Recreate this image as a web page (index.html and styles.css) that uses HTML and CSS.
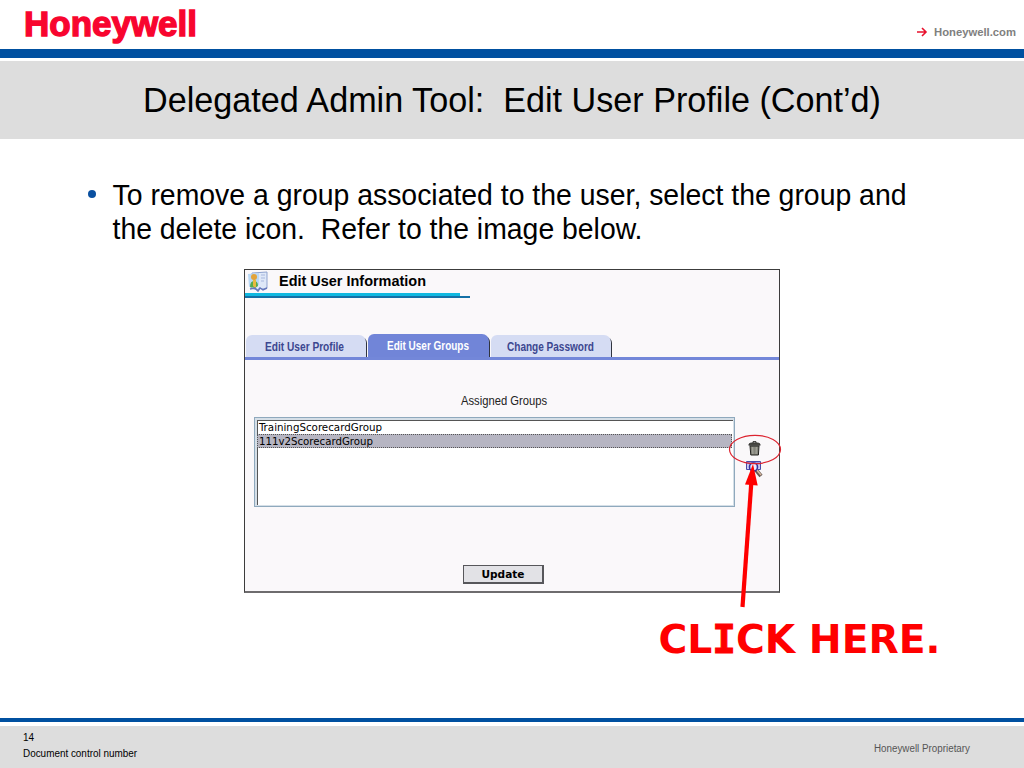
FILE: index.html
```html
<!DOCTYPE html>
<html lang="en">
<head>
  <meta charset="UTF-8">
  <meta name="viewport" content="width=device-width, initial-scale=1.0">
  <title>Delegated Admin Tool</title>
  <link rel="stylesheet" href="styles.css">
</head>
<body>
  <div class="slide">
    <header class="header">
      <svg class="logo" width="190" height="49" viewBox="0 0 190 49">
        <text x="1" y="36" textLength="173" lengthAdjust="spacingAndGlyphs">Honeywell</text>
      </svg>
      <div class="site-link">
        <svg width="10" height="10" viewBox="0 0 10 10"><path d="M0 5h9M5 1l4 4-4 4" fill="none" stroke="#e8112d" stroke-width="1.6"/></svg>
        <svg width="84" height="16" viewBox="0 0 84 16"><text x="0" y="12" textLength="82" lengthAdjust="spacingAndGlyphs">Honeywell.com</text></svg>
      </div>
    </header>

    <div class="title-bar">
      <svg width="760" height="60" viewBox="0 0 760 60"><text x="11" y="43" textLength="738" lengthAdjust="spacingAndGlyphs">Delegated Admin Tool:&#160; Edit User Profile (Cont’d)</text></svg>
    </div>

    <main class="content">
      <div class="bullet">
        <span class="dot"></span>
        <svg width="820" height="76" viewBox="0 0 820 76">
          <text x="0.5" y="30" textLength="794" lengthAdjust="spacingAndGlyphs">To remove a group associated to the user, select the group and</text>
          <text x="0.5" y="64" textLength="530" lengthAdjust="spacingAndGlyphs">the delete icon.&#160; Refer to the image below.</text>
        </svg>
      </div>

      <section class="panel">
        <div class="panel-head">
          <svg class="user-icon" width="22" height="21" viewBox="0 0 22 21">
            <path d="M4 2l15-1v16l-4 1-3-1-3 2-6-2z" fill="#dfe8f8" stroke="#8fa3cf"/>
            <path d="M0 3l11-1v12l-10 2z" fill="#b9d8f5"/>
            <path d="M13 4h4M13 7h4M13 10h3" stroke="#a9b8de"/>
            <path d="M2 16q0-6 4-6t4 5l-3 2z" fill="#57ab4e"/>
            <circle cx="6" cy="6" r="3" fill="#e2a33a"/>
            <path d="M5 9h3v7l-1 1-2-2z" fill="#e8b93f"/>
            <path d="M2 18l5-1 3 3 2-3 3 2 4-2" fill="none" stroke="#6678bd" stroke-width="1.5"/>
          </svg>
          <svg class="panel-title" width="160" height="23" viewBox="0 0 160 23"><text x="0" y="16" textLength="147" lengthAdjust="spacingAndGlyphs">Edit User Information</text></svg>
        </div>
        <div class="rule"></div>

        <nav class="tabs">
          <div class="tab"><svg width="88" height="18"><text x="4" y="14" textLength="79" lengthAdjust="spacingAndGlyphs">Edit User Profile</text></svg></div>
          <div class="tab active"><svg width="90" height="18"><text x="4" y="14" textLength="82" lengthAdjust="spacingAndGlyphs">Edit User Groups</text></svg></div>
          <div class="tab"><svg width="95" height="18"><text x="5" y="14" textLength="87" lengthAdjust="spacingAndGlyphs">Change Password</text></svg></div>
        </nav>

        <div class="groups-label"><svg width="96" height="16"><text x="0" y="12" textLength="86" lengthAdjust="spacingAndGlyphs">Assigned Groups</text></svg></div>
        <div class="groups">
          <div class="list">
            <div class="item"><svg width="136" height="14"><text x="1" y="10" textLength="123" lengthAdjust="spacingAndGlyphs">TrainingScorecardGroup</text></svg></div>
            <div class="item selected"><svg width="128" height="14"><text x="1" y="10.5" textLength="114" lengthAdjust="spacingAndGlyphs">111v2ScorecardGroup</text></svg></div>
          </div>
          <div class="tools">
            <svg width="13" height="15" viewBox="0 0 13 15">
              <path d="M2 5h9l-.6 9H2.8z" fill="#85857c" stroke="#22221f"/>
              <path d="M.8 4.2Q1 2 3 2h7q2 0 2.2 2.2z" fill="#555550" stroke="#22221f" stroke-width=".8"/>
              <path d="M5 2V.7h3V2" fill="none" stroke="#22221f"/>
              <path d="M4.7 6l.2 7M8.3 6l-.2 7" stroke="#aaaaa0"/>
            </svg>
            <svg width="17" height="18" viewBox="0 0 17 18">
              <path d="M.5 1.5h14v8H.5z" fill="#c9c9f2" stroke="#4b49a8"/>
              <path d="M1 3h13" stroke="#6d6bd0"/>
              <path d="M10 10l5 6" stroke="#66574f" stroke-width="4"/>
              <path d="M10 9l5 6" stroke="#d4b7a0" stroke-width="1.6"/>
              <circle cx="7.5" cy="7" r="4" fill="#e9e9ff" stroke="#3533a0" stroke-width="1.6"/>
            </svg>
          </div>
        </div>

        <div class="actions">
          <button class="update"><svg width="52" height="15"><text x="4.5" y="11" textLength="43" lengthAdjust="spacingAndGlyphs">Update</text></svg></button>
        </div>
      </section>

      <div class="callout">
        <svg width="300" height="50" viewBox="0 0 300 50"><text x="0.5" y="36" textLength="282" lengthAdjust="spacingAndGlyphs">CL<tspan class="slab">I</tspan>CK HERE.</text></svg>
      </div>
    </main>

    <footer class="footer">
      <div class="doc">
        <div>14</div>
        <svg width="126" height="16"><text x="0" y="12" textLength="114" lengthAdjust="spacingAndGlyphs">Document control number</text></svg>
      </div>
      <svg class="proprietary" width="108" height="16"><text x="0" y="12" textLength="96" lengthAdjust="spacingAndGlyphs">Honeywell Proprietary</text></svg>
    </footer>

    <svg class="pointer" width="60" height="180" viewBox="0 0 60 180">
      <ellipse cx="30" cy="19.5" rx="25.5" ry="14.2" fill="none" stroke="#dc2430" stroke-width="1.2"/>
      <path d="M17.5 177L26.5 50" stroke="#f00" stroke-width="4.2"/>
      <path d="M28 34L20 54.5L32.7 55.5Z" fill="#f00"/>
    </svg>
  </div>
</body>
</html>
```
FILE: styles.css
```css
body {
  margin: 0;
  font-family: "Liberation Sans", Arial, sans-serif;
  background-color: white;
  color: black;
}
svg {
  display: block;
  flex-shrink: 0;
  overflow: visible;
}
.slide {
  position: relative;
  display: flex;
  flex-direction: column;
  width: 1024px;
  height: 768px;
  overflow: hidden;
}
.header {
  display: flex;
  justify-content: space-between;
  height: 49px;
  padding: 0 6px 0 23px;
  border-bottom: 9px solid #0050a0;
}
.logo text {
  font-size: 35px;
  font-weight: bold;
  fill: #f8052f;
  stroke: #f8052f;
  stroke-width: 1.4px;
}
.site-link {
  display: flex;
  align-items: center;
  gap: 7px;
  padding-top: 15px;
  font-size: 11px;
  font-weight: bold;
  fill: #808080;
}
.title-bar {
  display: flex;
  justify-content: center;
  height: 70px;
  margin-top: 3px;
  padding-top: 8px;
  background-color: #ddd;
  font-size: 34.5px;
}
.content {
  display: flex;
  flex-direction: column;
  height: 578px;
  padding-top: 1px;
}
.bullet {
  display: flex;
  height: 94px;
  padding: 35px 0 0 88px;
  gap: 16px;
  font-size: 29px;
}
.dot {
  width: 8px;
  height: 8px;
  margin-top: 15px;
  border-radius: 50%;
  background-color: #0a50a0;
}
.panel {
  box-sizing: border-box;
  width: 536px;
  height: 324px;
  margin-left: 244px;
  border: 1px solid #3c3c3c;
  border-bottom: 2px solid #6e6c6e;
  background-color: #faf8fa;
}
.panel-head {
  display: flex;
  gap: 9px;
  height: 23px;
  padding-left: 3px;
}
.user-icon {
  margin-top: 1px;
}
.panel-title {
  font-size: 15px;
  font-weight: bold;
}
.rule {
  width: 215px;
  height: 3px;
  background-color: #10b8e0;
}
.rule::after {
  content: "";
  display: block;
  width: 225px;
  height: 2px;
  transform: translateY(3px);
  background-color: #1470a6;
}
.tabs {
  display: flex;
  align-items: flex-end;
  height: 61px;
  padding-left: 1px;
  border-bottom: 3px solid #7387d9;
}
.tab {
  display: flex;
  align-items: center;
  justify-content: center;
  box-sizing: border-box;
  width: 120px;
  height: 22px;
  margin-right: 2px;
  padding-right: 3px;
  border-radius: 6px 7px 0 0;
  background-color: #d5dcf3;
  box-shadow: 2px 1px 0 -1px #30343f;
  font-size: 12px;
  font-weight: bold;
  fill: #3c4790;
}
.tab.active {
  width: 121px;
  height: 23px;
  padding-right: 1px;
  padding-bottom: 1px;
  background-color: #7185d8;
  fill: white;
}
.groups-label {
  padding: 33px 0 8px 216px;
  font-size: 12.5px;
  fill: #222;
}
.groups {
  display: flex;
  gap: 11px;
  height: 90px;
  padding-left: 9px;
}
.list {
  box-sizing: border-box;
  width: 481px;
  height: 90px;
  padding-top: 1px;
  border: 1px solid #8fa9bd;
  outline: 1px solid #d5dfe7;
  outline-offset: -2px;
  box-shadow: inset 2px 2px 0 #d5dfe7, inset 3px 3px 0 #555;
  background-color: white;
  font-family: "DejaVu Sans Condensed", "DejaVu Sans", sans-serif;
  font-size: 11px;
}
.item {
  box-sizing: border-box;
  height: 14px;
  margin: 0 2px;
  padding-left: 1px;
}
.item:first-child {
  height: 15px;
  padding-top: 2px;
}
.item.selected {
  background-color: #b6b5c2;
  outline: 1px dotted #555;
  outline-offset: -1px;
}
.tools {
  display: flex;
  flex-direction: column;
  align-items: center;
  gap: 4px;
  padding-top: 24px;
}
.actions {
  padding: 58px 0 0 218px;
}
.update {
  display: flex;
  align-items: center;
  justify-content: center;
  width: 81px;
  height: 19px;
  padding: 0;
  border: 2px solid #57575b;
  border-width: 1px 2px 2px 1px;
  background-color: #e2e2e6;
  font-family: "DejaVu Sans", sans-serif;
  font-size: 10.5px;
  font-weight: bold;
}
.callout {
  padding: 24px 0 0 658px;
  font-family: "DejaVu Sans", Verdana, sans-serif;
  font-size: 39.5px;
  font-weight: bold;
  fill: #f00;
}
.slab {
  font-family: "DejaVu Sans Mono", monospace;
  stroke: #f00;
  stroke-width: 1px;
}
.footer {
  display: flex;
  justify-content: space-between;
  box-sizing: border-box;
  height: 42px;
  margin-top: auto;
  padding: 0 42px 0 23px;
  background-color: #ddd;
  box-shadow: 0 -4px 0 white, 0 -8px 0 #0050a0;
  font-size: 10px;
}
.doc {
  padding-top: 6px;
}
.doc svg {
  margin-top: 2px;
}
.proprietary {
  margin-top: 14px;
  fill: #555;
}
.pointer {
  position: absolute;
  left: 725px;
  top: 430px;
}
```
